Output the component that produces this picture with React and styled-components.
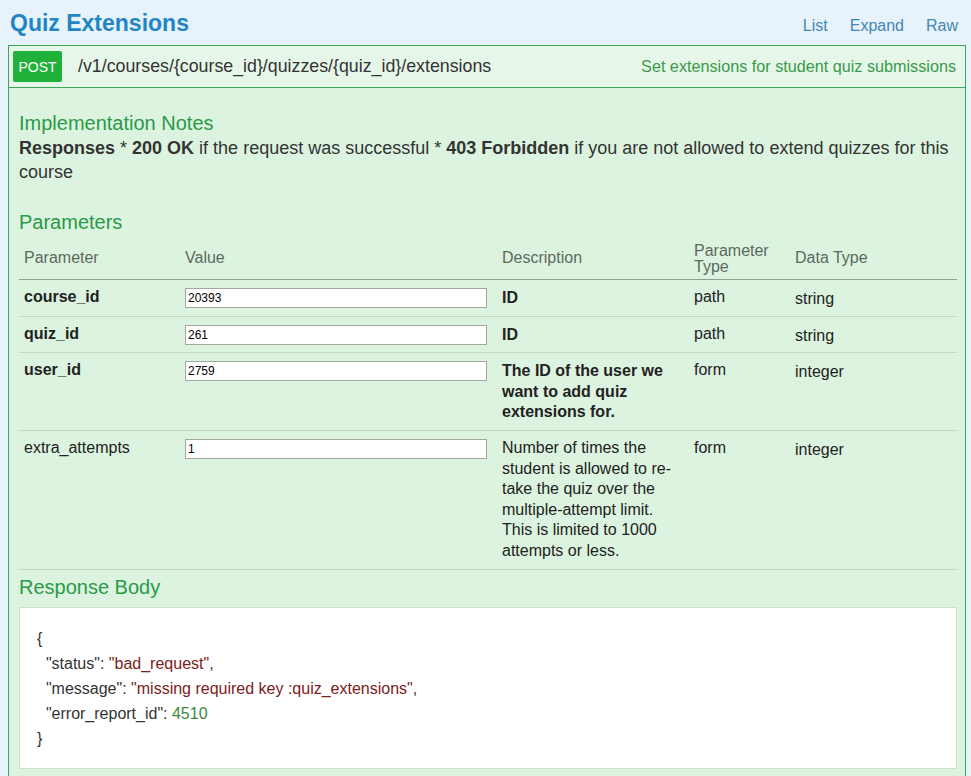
import React from 'react';
import styled, { createGlobalStyle, css } from 'styled-components';

const GlobalStyle = createGlobalStyle`
	html, body {
		margin: 0;
		padding: 0;
		background: #e6f3fb;
		font-family: 'Liberation Sans', Arial, sans-serif;
		color: #333;
	}
`;

const Page = styled.div`
	padding: 0 5px 0 8px;
`;

/**
 * Resource header
 */

const ResourceHeader = styled.div`
	height: 45px;
	display: flex;
	align-items: center;
	justify-content: space-between;
	padding: 0 2px 0 2px;
`;

const Title = styled.h2`
	margin: 0;
	font-size: 23px;
	font-weight: 700;
	color: #2384c6;
	padding-top: 2px;
`;

const Links = styled.div`
	display: flex;
	gap: 22px;
	padding-right: 6px;
	padding-top: 6px;
	a {
		color: #4585b5;
		font-size: 16px;
		text-decoration: none;
	}
`;

/**
 * Operation
 */

const Operation = styled.div`
	border: 1px solid #3aa856;
	border-bottom: none;
	background: #dcf3df;
`;

const OperationHeading = styled.div`
	height: 41px;
	display: flex;
	align-items: center;
	padding: 0 9px 0 4px;
	background: #e6f7e9;
	border-bottom: 1px solid #3aa856;
`;

const Method = styled.span`
	width: 49px;
	height: 31px;
	display: flex;
	align-items: center;
	justify-content: center;
	background: #20b13a;
	color: #fff;
	font-size: 14px;
	border-radius: 2px;
`;

const Path = styled.span`
	margin-left: 16px;
	font-size: 17.8px;
	color: #333;
	flex: 1;
`;

const Summary = styled.span`
	font-size: 16.2px;
	color: #3a9a4a;
`;

const Content = styled.div`
	padding: 22px 8px 8px 10px;
`;

const SectionTitle = styled.h4`
	margin: 0;
	font-size: 20px;
	font-weight: 400;
	color: #2a9a48;
	line-height: 26px;
	${({ $spaced }) =>
		$spaced &&
		css`
			margin-top: 25px;
		`}
	${({ $tight }) =>
		$tight &&
		css`
			margin-top: 4px;
		`}
`;

const Notes = styled.p`
	margin: 0;
	font-size: 18px;
	line-height: 24px;
	color: #333;
	b {
		color: #333;
	}
`;

/**
 * Parameters
 */

const Table = styled.table`
	width: 100%;
	border-collapse: collapse;
	margin-top: 2px;
	font-size: 16px;
	th {
		text-align: left;
		font-weight: 400;
		color: #5d6a5e;
		padding: 0 5px;
		height: 42px;
		vertical-align: middle;
		border-bottom: 1px solid #8d9f8f;
	}
	td {
		padding: 7px 5px 7px 5px;
		vertical-align: top;
		line-height: 20.6px;
		color: #222;
		border-bottom: 1px solid #c5d6c7;
	}
`;

const TwoLine = styled.span`
	display: block;
	line-height: 16px;
	padding-top: 2px;
`;

const Name = styled.td`
	font-weight: ${({ $required }) => ($required ? 700 : 400)};
`;

const Desc = styled.td`
	font-weight: ${({ $strong }) => ($strong ? 700 : 400)};
	color: #222;
	&& {
		padding-top: ${({ $strong }) => ($strong ? '8px' : '7px')};
	}
`;

const ValueInput = styled.input`
	display: block;
	box-sizing: border-box;
	width: 302px;
	height: 20px;
	margin: 1px 0 0 0;
	padding: 1px 2px;
	border: 1px solid #a0a8a0;
	background: #fff;
	font-family: 'Liberation Sans', Arial, sans-serif;
	font-size: 12px;
	color: #000;
`;

const TypeCell = styled.td`
	&& {
		padding-top: 9px;
		padding-bottom: 5px;
	}
`;

/**
 * Response body
 */

const ResponseBox = styled.pre`
	margin: 7px 0 0 0;
	padding: 18px 17px 17px 17px;
	background: #fff;
	border: 1px solid #cfe0d1;
	font-family: 'Liberation Sans', Arial, sans-serif;
	font-size: 16px;
	line-height: 25px;
	color: #333;
	white-space: pre;
`;

const Str = styled.span`
	color: #7a2222;
`;

const Num = styled.span`
	color: #3c8a3c;
`;

const params = [
	{ name: 'course_id', value: '20393', desc: 'ID', strongDesc: true, required: true, paramType: 'path', dataType: 'string' },
	{ name: 'quiz_id', value: '261', desc: 'ID', strongDesc: true, required: true, paramType: 'path', dataType: 'string' },
	{
		name: 'user_id',
		value: '2759',
		desc: 'The ID of the user we want to add quiz extensions for.',
		strongDesc: true,
		required: true,
		paramType: 'form',
		dataType: 'integer',
	},
	{
		name: 'extra_attempts',
		value: '1',
		desc: 'Number of times the student is allowed to re-take the quiz over the multiple-attempt limit. This is limited to 1000 attempts or less.',
		strongDesc: false,
		required: false,
		paramType: 'form',
		dataType: 'integer',
	},
];

const App = () => {
	return (
		<>
			<GlobalStyle />
			<Page>
				<ResourceHeader>
					<Title>Quiz Extensions</Title>
					<Links>
						<a href="#list">List</a>
						<a href="#expand">Expand</a>
						<a href="#raw">Raw</a>
					</Links>
				</ResourceHeader>
				<Operation>
					<OperationHeading>
						<Method>POST</Method>
						<Path>/v1/courses/{'{course_id}'}/quizzes/{'{quiz_id}'}/extensions</Path>
						<Summary>Set extensions for student quiz submissions</Summary>
					</OperationHeading>
					<Content>
						<SectionTitle>Implementation Notes</SectionTitle>
						<Notes>
							<b>Responses</b>
							{' * '}
							<b>200 OK</b>
							{' if the request was successful * '}
							<b>403 Forbidden</b>
							<span>{' if you are not allowed to extend quizzes for this '}</span>
							<span>course</span>
						</Notes>
						<SectionTitle $spaced>Parameters</SectionTitle>
						<Table>
							<colgroup>
								<col style={{ width: 161 }} />
								<col style={{ width: 317 }} />
								<col style={{ width: 192 }} />
								<col style={{ width: 101 }} />
								<col />
							</colgroup>
							<thead>
								<tr>
									<th>Parameter</th>
									<th>Value</th>
									<th>Description</th>
									<th>
										<TwoLine>
											Parameter
											<br />
											Type
										</TwoLine>
									</th>
									<th>Data Type</th>
								</tr>
							</thead>
							<tbody>
								{params.map((p) => (
									<tr key={p.name}>
										<Name $required={p.required}>{p.name}</Name>
										<td>
											<ValueInput defaultValue={p.value} />
										</td>
										<Desc $strong={p.strongDesc}>{p.desc}</Desc>
										<td>{p.paramType}</td>
										<TypeCell>{p.dataType}</TypeCell>
									</tr>
								))}
							</tbody>
						</Table>
						<SectionTitle $tight>Response Body</SectionTitle>
						<ResponseBox>
							{'{\n'}
							{'  "status": '}
							<Str>"bad_request"</Str>
							{',\n'}
							{'  "message": '}
							<Str>"missing required key :quiz_extensions"</Str>
							{',\n'}
							{'  "error_report_id": '}
							<Num>4510</Num>
							{'\n}'}
						</ResponseBox>
					</Content>
				</Operation>
			</Page>
		</>
	);
};

export default App;
